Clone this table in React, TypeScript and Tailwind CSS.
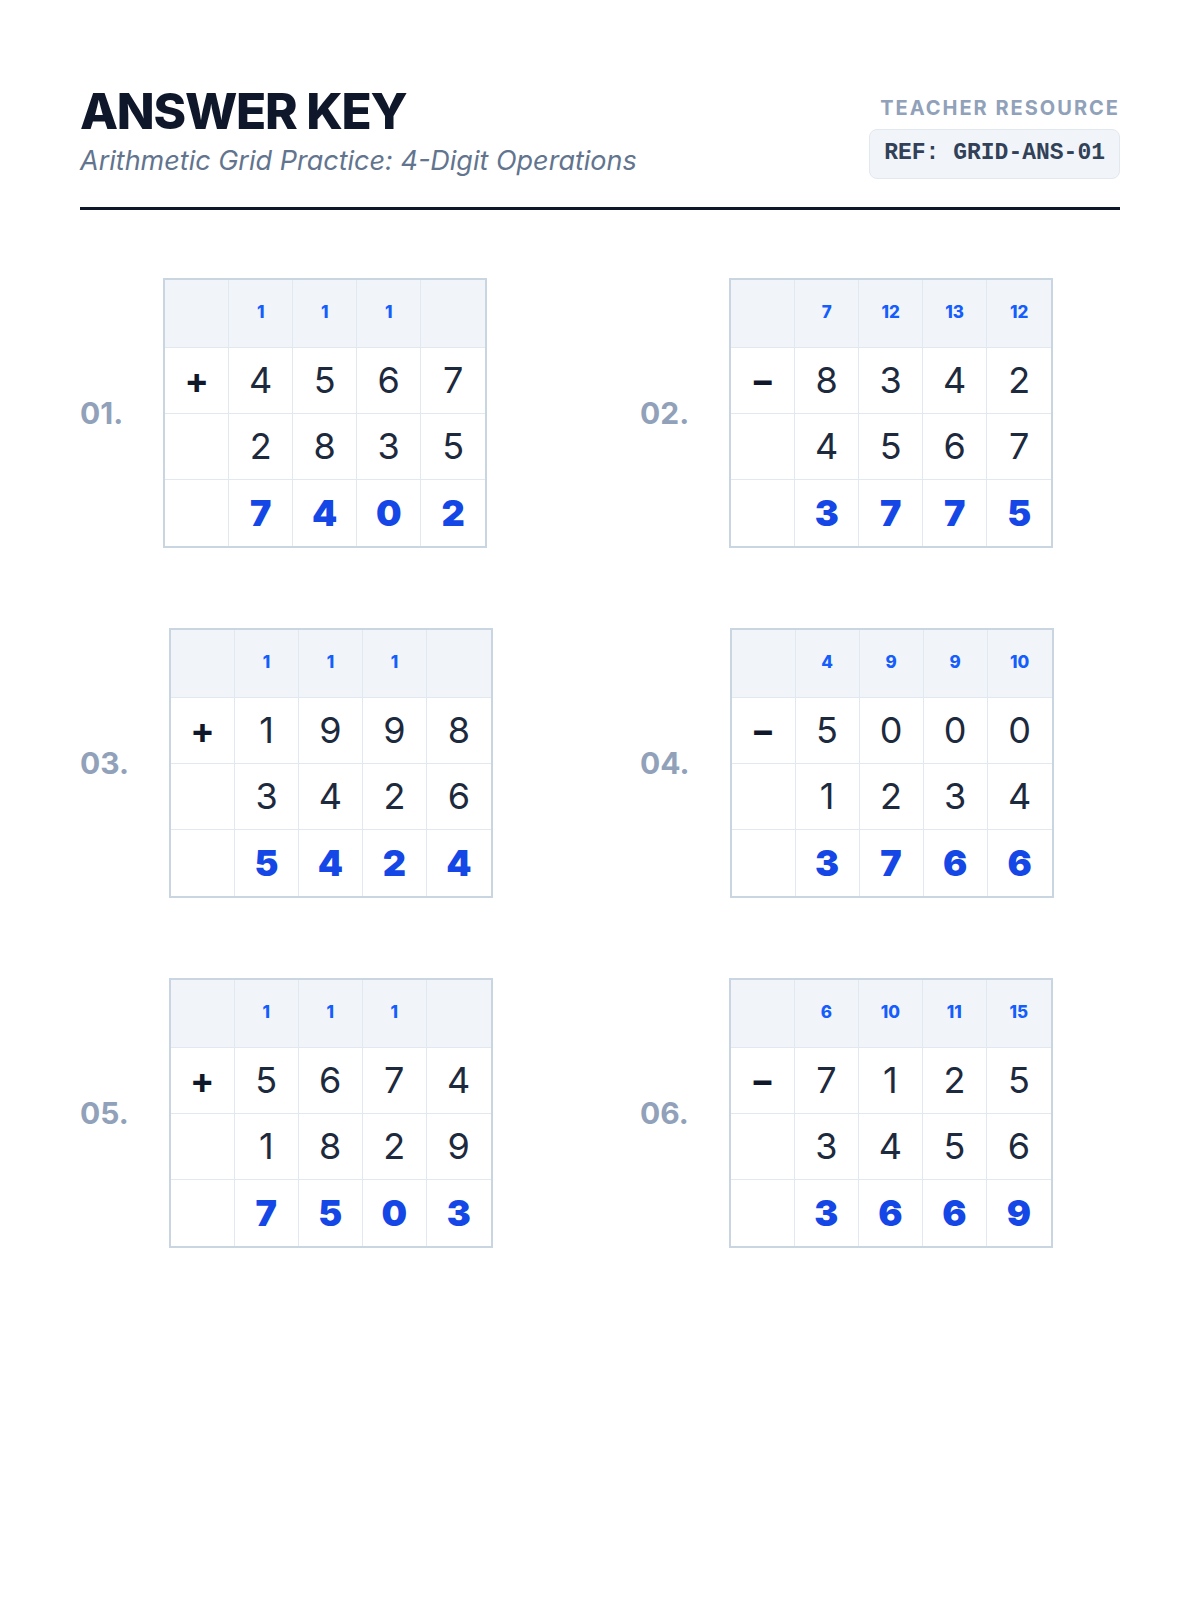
import React from "react";

interface Problem {
  id: string;
  op: string;
  carry: string[];
  top: string;
  bottom: string;
  answer: string;
}

const problems: Problem[] = [
  { id: "01", op: "+", carry: ["1", "1", "1", ""], top: "4567", bottom: "2835", answer: "7402" },
  { id: "02", op: "−", carry: ["7", "12", "13", "12"], top: "8342", bottom: "4567", answer: "3775" },
  { id: "03", op: "+", carry: ["1", "1", "1", ""], top: "1998", bottom: "3426", answer: "5424" },
  { id: "04", op: "−", carry: ["4", "9", "9", "10"], top: "5000", bottom: "1234", answer: "3766" },
  { id: "05", op: "+", carry: ["1", "1", "1", ""], top: "5674", bottom: "1829", answer: "7503" },
  { id: "06", op: "−", carry: ["6", "10", "11", "15"], top: "7125", bottom: "3456", answer: "3669" },
];

const Cell = ({
  children,
  lastCol,
  lastRow,
  className = "h-[66px]",
}: {
  children?: React.ReactNode;
  lastCol?: boolean;
  lastRow?: boolean;
  className?: string;
}) => (
  <div
    className={`flex w-16 items-center justify-center border-slate-200 ${lastCol ? "" : "border-r"} ${lastRow ? "" : "border-b"} ${className}`}
  >
    {children}
  </div>
);

const ProblemGrid = ({ problem }: { problem: Problem }) => {
  const top = problem.top.split("");
  const bottom = problem.bottom.split("");
  const answer = problem.answer.split("");

  return (
    <div className="flex items-center gap-10">
      <span className="text-3xl font-bold text-slate-400">{problem.id}.</span>
      <div className="grid grid-cols-5 border-2 border-slate-300">
        {/* carry / borrow row */}
        <Cell className="h-[68px] bg-slate-100" />
        {problem.carry.map((c, i) => (
          <Cell key={"c" + i} lastCol={i === 3} className="h-[68px] bg-slate-100 text-[17px] font-extrabold text-blue-600">
            {c}
          </Cell>
        ))}

        <Cell className="h-[66px] text-4xl font-bold text-slate-900">{problem.op}</Cell>
        {top.map((d, i) => (
          <Cell key={"t" + i} lastCol={i === 3} className="h-[66px] text-4xl text-slate-800">
            {d}
          </Cell>
        ))}

        <Cell />
        {bottom.map((d, i) => (
          <Cell key={"b" + i} lastCol={i === 3} className="h-[66px] text-4xl text-slate-800">
            {d}
          </Cell>
        ))}

        <Cell lastRow />
        {answer.map((d, i) => (
          <Cell key={"a" + i} lastCol={i === 3} lastRow className="h-[66px] text-4xl font-black text-blue-700">
            {d}
          </Cell>
        ))}
      </div>
    </div>
  );
};

export default function App() {
  return (
    <div className="min-h-screen bg-white px-20 pt-[87px] font-['Inter','Noto_Sans',sans-serif]">
      <header className="flex items-end justify-between border-b-[3px] border-slate-900 pb-[28px]">
        <div>
          <h1 className="text-[49.5px] leading-none font-extrabold tracking-tight text-slate-900">ANSWER KEY</h1>
          <p className="mt-1.5 text-[27px] leading-9 text-slate-500 italic">
            Arithmetic Grid Practice: 4-Digit Operations
          </p>
        </div>
        <div className="flex flex-col items-end">
          <span className="text-[20px] leading-[30px] font-bold tracking-[0.1em] text-slate-400">TEACHER RESOURCE</span>
          <div className="mt-1.5 flex h-[50px] items-center rounded-lg border border-slate-200 bg-slate-100 px-[14px] font-mono text-[23px] font-bold text-slate-700">
            REF: GRID-ANS-01
          </div>
        </div>
      </header>

      <main className="mt-[68px] grid grid-cols-2 gap-x-20 gap-y-20">
        {problems.map((p) => (
          <ProblemGrid key={p.id} problem={p} />
        ))}
      </main>
    </div>
  );
}
